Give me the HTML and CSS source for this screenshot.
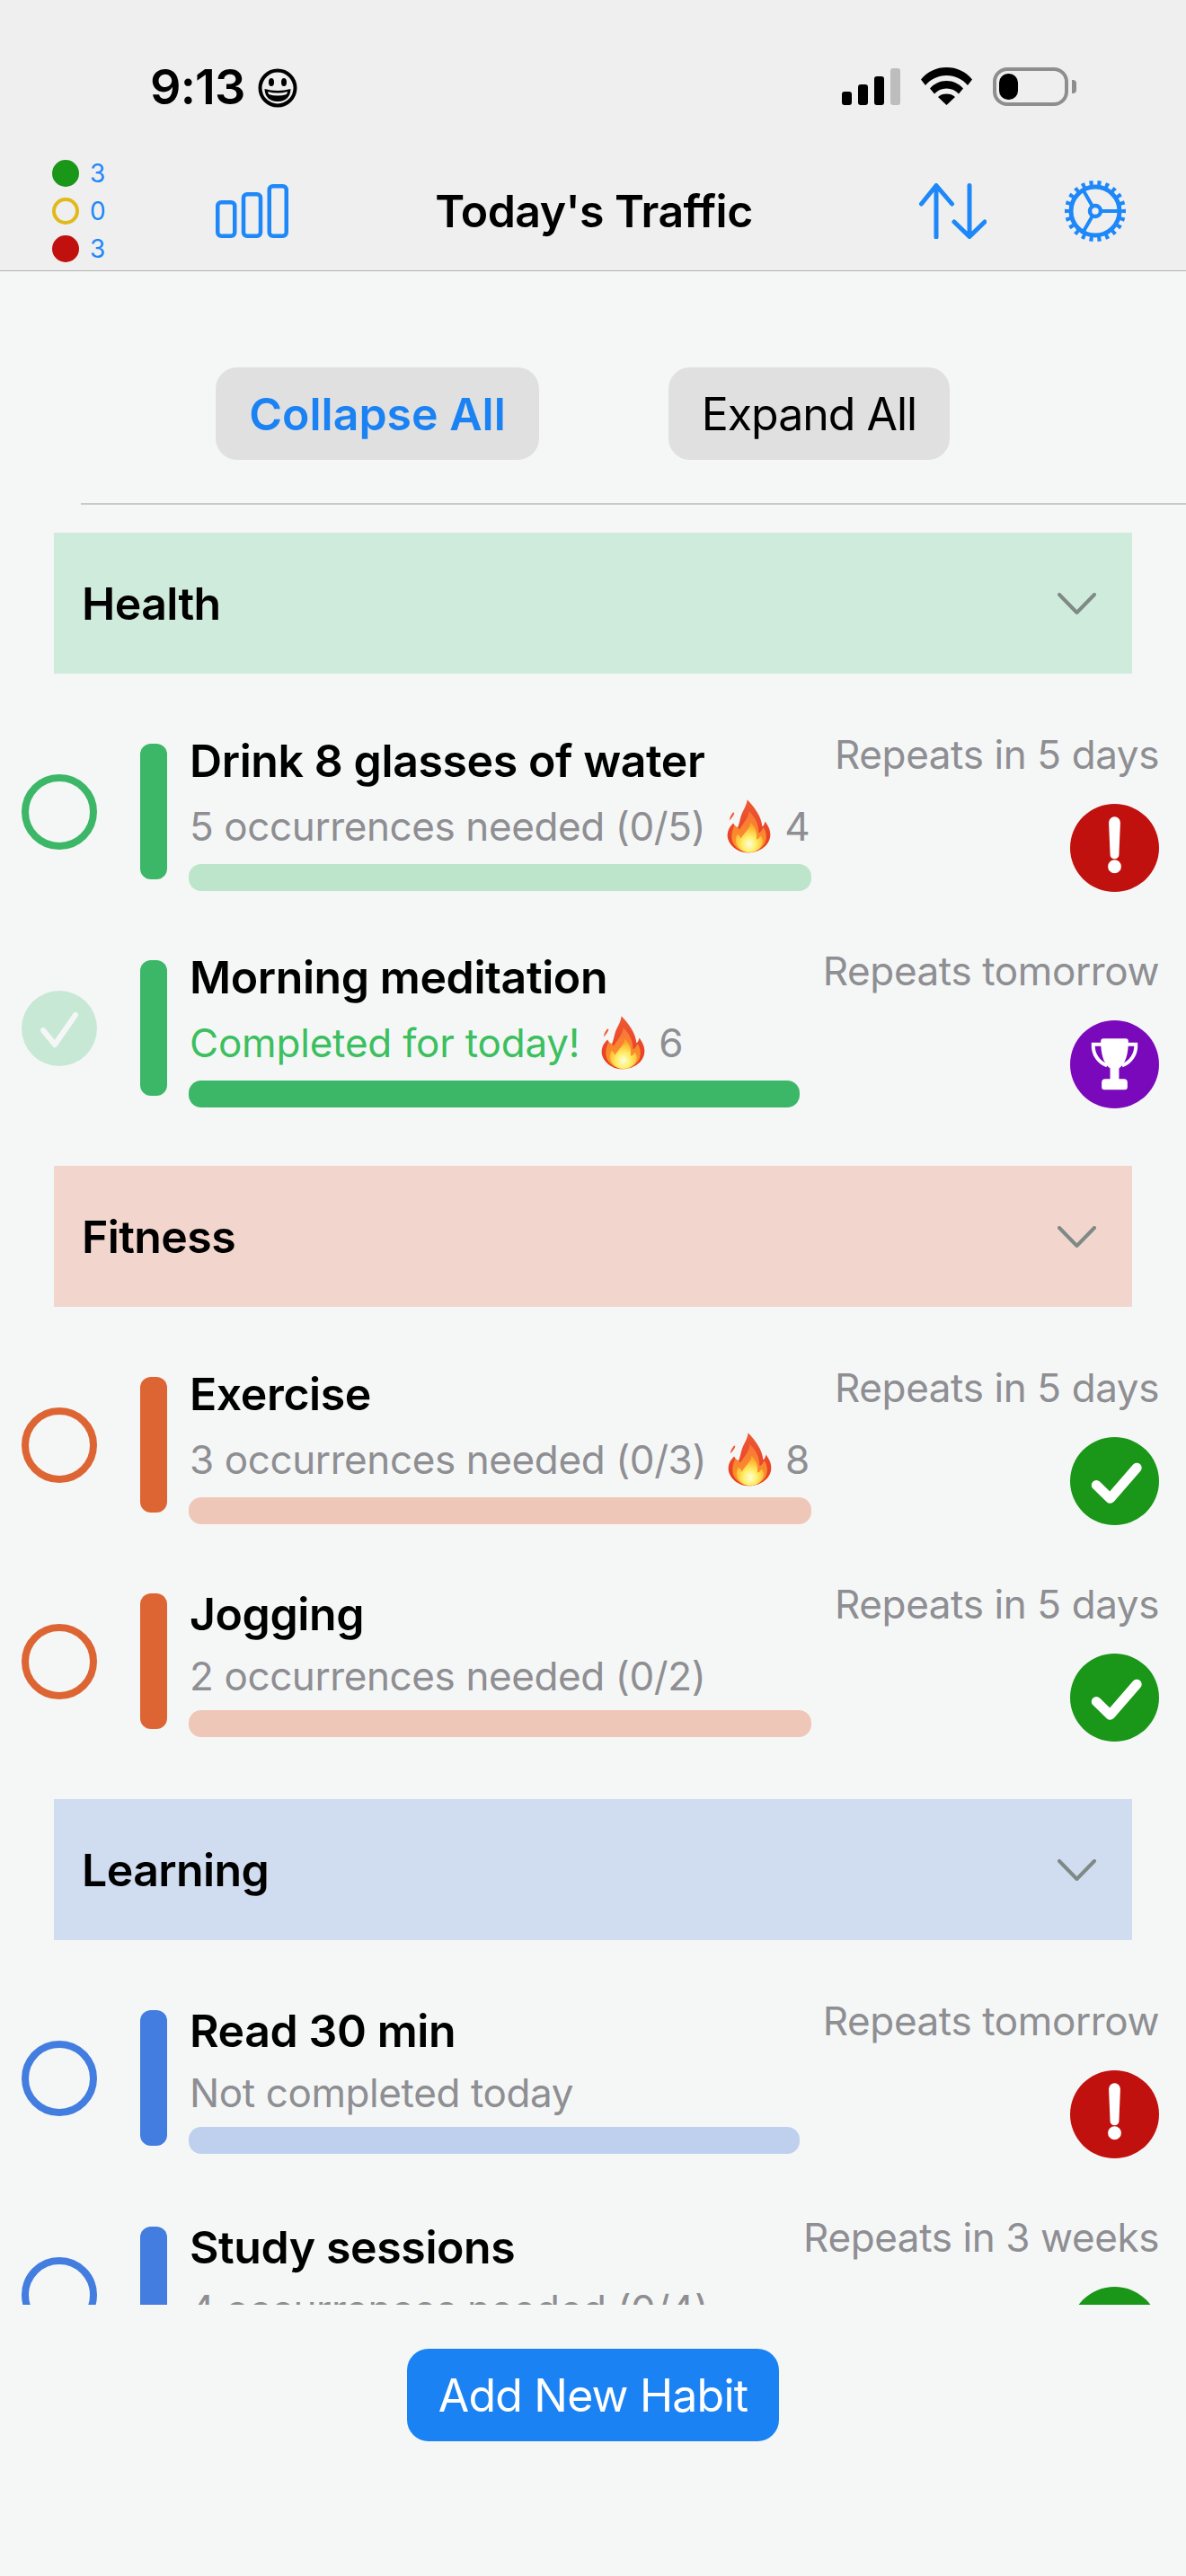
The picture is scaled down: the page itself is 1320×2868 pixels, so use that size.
FILE: index.html
```html
<!DOCTYPE html>
<html lang="en">
<head>
<meta charset="utf-8">
<title>Today's Traffic</title>
<link rel="stylesheet" href="styles.css">
</head>
<body>
<svg class="defs" aria-hidden="true">
  <defs>
    <linearGradient id="fireOuter" x1="0" y1="0" x2="0" y2="1"><stop offset="0" stop-color="#ee5a35"/><stop offset="1" stop-color="#e6391f"/></linearGradient>
    <linearGradient id="fireMid" x1="0" y1="0" x2="0" y2="1"><stop offset="0" stop-color="#f8743a"/><stop offset="1" stop-color="#fb9a22"/></linearGradient>
    <radialGradient id="fireCore" cx="0.5" cy="0.72" r="0.62"><stop offset="0" stop-color="#fffde0"/><stop offset="0.4" stop-color="#fff06a"/><stop offset="1" stop-color="#fbaa25"/></radialGradient>
    <symbol id="fire" viewBox="36 24 152 186">
      <path fill="url(#fireOuter)" d="M106 25C104 48 92 60 84 84C80 98 78 112 72 124C66 118 62 112 58 106C46 118 38 130 38 150C40 180 72 208 110 208C152 208 186 180 186 146C186 128 178 114 168 100C166 108 164 114 158 118C156 84 132 52 106 25Z"/>
      <path fill="#ef5a33" d="M58 68C52 76 46 84 45 96C50 92 58 82 62 72Z"/>
      <path fill="url(#fireMid)" d="M112 64C112 88 90 108 80 128C74 120 68 118 62 114C54 130 50 148 54 166C62 192 86 206 112 206C144 206 172 184 172 154C172 140 168 128 162 120C158 128 154 136 146 140C146 110 134 84 112 64Z"/>
      <path fill="url(#fireCore)" d="M118 104C118 124 94 140 84 160C82 152 78 148 72 144C66 156 64 168 70 180C78 198 94 207 112 207C136 207 158 192 160 168C160 160 156 152 152 150C148 156 144 162 138 162C142 140 134 120 118 104Z"/>
    </symbol>
    <symbol id="alert" viewBox="0 0 99 99">
      <path fill="#fff" d="M43 21a6.5 6.500 0 0 1 13 0l-1.500 36a5 5 0 0 1-10 0Z"/>
      <circle cx="49.500" cy="70.500" r="7.500" fill="#fff"/>
    </symbol>
    <symbol id="tick" viewBox="0 0 99 99">
      <path fill="none" stroke="#fff" stroke-width="11" stroke-linecap="round" stroke-linejoin="round" d="M29 54L44.500 69L74.500 34.500"/>
    </symbol>
    <symbol id="trophy" viewBox="0 0 99 99">
      <path fill="none" stroke="#fff" stroke-width="4" d="M36 27H25.500C25 38 31 47 41 51M63 27H73.500C74 38 68 47 58 51"/>
      <path fill="#fff" d="M37 20.500H62a3 3 0 0 1 3 3C65 38 62 49 54.500 54V66H60a4 4 0 0 1 4 4V75a3 3 0 0 1-3 3H38a3 3 0 0 1-3-3V70a4 4 0 0 1 4-4H44.500V54C37 49 34 38 34 23.500a3 3 0 0 1 3-3Z"/>
    </symbol>
    <symbol id="chevron" viewBox="0 0 43 24">
      <path fill="none" stroke="currentColor" stroke-width="4" stroke-linecap="round" stroke-linejoin="round" d="M2 2L21.500 22L41 2"/>
    </symbol>
    <symbol id="done" viewBox="0 0 84 84">
      <path fill="none" stroke="#f5f7f6" stroke-width="6" stroke-linecap="round" stroke-linejoin="round" d="M24 44L37 60L60 27"/>
    </symbol>
  </defs>
</svg>

<div class="app">
  <header class="top">
    <div class="status">
      <span class="clock">9:13</span>
      <svg class="smiley" viewBox="0 0 44 44">
        <circle cx="22" cy="22" r="19.500" fill="none" stroke="#000" stroke-width="4"/>
        <ellipse cx="15" cy="15.500" rx="3" ry="4.500"/>
        <ellipse cx="29" cy="15.500" rx="3" ry="4.500"/>
        <path d="M7.500 23Q22 27 36.500 23Q36 36.500 22 37Q8 36.500 7.500 23Z"/>
        <path fill="#efefef" d="M11 26Q22 29 33 26L32 29Q22 32 12 29Z"/>
      </svg>
      <div class="status-right">
        <svg class="signal" viewBox="0 0 65 41">
          <rect x="0" y="26" width="11" height="15" rx="3"/>
          <rect x="18" y="18" width="11" height="23" rx="3"/>
          <rect x="36" y="9" width="11" height="32" rx="3"/>
          <rect x="54" y="0" width="11" height="41" rx="3" fill="#bdbdbd"/>
        </svg>
        <svg class="wifi" viewBox="0 0 57 42">
          <path d="M28.500 0C17 0 7.500 4.500 0 13.500L5 20C11 13 19 9 28.500 9S46 13 52 20L57 13.500C49.500 4.500 40 0 28.500 0Z"/>
          <path d="M28.500 15C21 15 15 18 10 23.500L15 29.500C18.500 25.500 23 23.500 28.500 23.500S38.500 25.500 42 29.500L47 23.500C42 18 36 15 28.500 15Z"/>
          <path d="M28.500 29.500C24.500 29.500 21.500 30.500 19 33L28.500 42L38 33C35.500 30.500 32.500 29.500 28.500 29.500Z"/>
        </svg>
        <div class="battery"><span class="battery-fill"></span></div>
        <span class="battery-nub"></span>
      </div>
    </div>
    <nav class="nav">
      <div class="legend">
        <div class="legend-row"><span class="dot dot-green"></span><span class="legend-num">3</span></div>
        <div class="legend-row"><span class="dot dot-yellow"></span><span class="legend-num">0</span></div>
        <div class="legend-row"><span class="dot dot-red"></span><span class="legend-num">3</span></div>
      </div>
      <svg class="icon-chart" viewBox="0 0 81 60" fill="none" stroke="#1e88f8" stroke-width="4.500">
        <rect x="2.250" y="20.250" width="19" height="37.500" rx="4"/>
        <rect x="31" y="11.250" width="19" height="46.500" rx="4"/>
        <rect x="59.750" y="2.250" width="19" height="55.500" rx="4"/>
      </svg>
      <h1 class="title">Today's Traffic</h1>
      <svg class="icon-sort" viewBox="0 0 75 62" fill="none" stroke="#1e88f8" stroke-width="5" stroke-linecap="round" stroke-linejoin="round">
        <path d="M19 60V3M2.500 23L19 2.500L36.500 23"/>
        <path d="M56 2.500V59M39 43L56 59.500L73 43"/>
      </svg>
      <svg class="icon-gear" viewBox="0 0 70 70" fill="none" stroke="#1e88f8">
        <circle cx="35" cy="35" r="27" stroke-width="5"/>
        <circle cx="35" cy="35" r="31" stroke-width="6" pathLength="22" stroke-dasharray="0.460 0.540" stroke-dashoffset="0.230"/>
        <circle cx="35" cy="35" r="6" stroke-width="4.500"/>
        <path stroke-width="4" d="M41 35H61M32 29.800L22 12.500M32 40.200L22 57.500"/>
      </svg>
    </nav>
  </header>

  <main class="main">
    <div class="toolbar">
      <button class="pill pill-active">Collapse All</button>
      <button class="pill pill-plain">Expand All</button>
    </div>
    <div class="rule"></div>

    <section class="group green">
      <div class="group-head"><span class="group-name">Health</span><svg class="chev"><use href="#chevron"/></svg></div>
      <article class="habit">
        <div class="lead"><span class="ring"></span><span class="stripe"></span></div>
        <div class="body">
          <div class="name">Drink 8 glasses of water</div>
          <div class="sub"><span>5 occurrences needed (0/5)</span><svg class="fire"><use href="#fire"/></svg><span>4</span></div>
          <div class="track"></div>
        </div>
        <div class="side">
          <div class="repeat">Repeats in 5 days</div>
          <svg class="badge badge-red"><use href="#alert"/></svg>
        </div>
      </article>
      <article class="habit">
        <div class="lead"><svg class="ring-done"><use href="#done"/></svg><span class="stripe"></span></div>
        <div class="body">
          <div class="name">Morning meditation</div>
          <div class="sub"><span class="sub-done">Completed for today!</span><svg class="fire"><use href="#fire"/></svg><span>6</span></div>
          <div class="track track-full"></div>
        </div>
        <div class="side">
          <div class="repeat">Repeats tomorrow</div>
          <svg class="badge badge-purple"><use href="#trophy"/></svg>
        </div>
      </article>
    </section>

    <section class="group orange">
      <div class="group-head"><span class="group-name">Fitness</span><svg class="chev"><use href="#chevron"/></svg></div>
      <article class="habit">
        <div class="lead"><span class="ring"></span><span class="stripe"></span></div>
        <div class="body">
          <div class="name">Exercise</div>
          <div class="sub"><span>3 occurrences needed (0/3)</span><svg class="fire"><use href="#fire"/></svg><span>8</span></div>
          <div class="track"></div>
        </div>
        <div class="side">
          <div class="repeat">Repeats in 5 days</div>
          <svg class="badge badge-green"><use href="#tick"/></svg>
        </div>
      </article>
      <article class="habit">
        <div class="lead"><span class="ring"></span><span class="stripe"></span></div>
        <div class="body body-plain">
          <div class="name">Jogging</div>
          <div class="sub"><span>2 occurrences needed (0/2)</span></div>
          <div class="track"></div>
        </div>
        <div class="side">
          <div class="repeat">Repeats in 5 days</div>
          <svg class="badge badge-green"><use href="#tick"/></svg>
        </div>
      </article>
    </section>

    <section class="group blue">
      <div class="group-head"><span class="group-name">Learning</span><svg class="chev"><use href="#chevron"/></svg></div>
      <article class="habit">
        <div class="lead"><span class="ring"></span><span class="stripe"></span></div>
        <div class="body body-plain">
          <div class="name">Read 30 min</div>
          <div class="sub"><span>Not completed today</span></div>
          <div class="track"></div>
        </div>
        <div class="side">
          <div class="repeat">Repeats tomorrow</div>
          <svg class="badge badge-red"><use href="#alert"/></svg>
        </div>
      </article>
      <article class="habit">
        <div class="lead"><span class="ring"></span><span class="stripe"></span></div>
        <div class="body body-plain">
          <div class="name">Study sessions</div>
          <div class="sub"><span>4 occurrences needed (0/4)</span></div>
          <div class="track"></div>
        </div>
        <div class="side">
          <div class="repeat">Repeats in 3 weeks</div>
          <svg class="badge badge-green"><use href="#tick"/></svg>
        </div>
      </article>
    </section>
  </main>

  <footer class="foot">
    <button class="add">Add New Habit</button>
  </footer>
</div>
</body>
</html>
```

FILE: styles.css
```css
* { box-sizing: border-box; }
html, body { margin: 0; padding: 0; }
body { background: #f5f7f6; font-family: Inter, "Liberation Sans", sans-serif; color: #000; }
.defs { display: block; width: 0; height: 0; }
.app { display: flex; flex-direction: column; height: 2868px; overflow: hidden; }

.top { background: #efefef; border-bottom: 1px solid #b0b0b0; height: 302px; flex: none; }
.status { height: 169px; display: flex; align-items: flex-start; padding: 64px 0 0 167px; }
.clock { font-size: 54px; font-weight: 600; line-height: 66px; letter-spacing: -0.9px; }
.smiley { width: 44px; height: 44px; margin: 12px 0 0 15px; }
.status-right { display: flex; align-items: flex-start; margin-left: auto; padding-right: 122px; padding-top: 11px; }
.signal { width: 65px; height: 41px; margin-top: 1px; }
.wifi { width: 57px; height: 42px; margin-left: 23px; }
.battery { width: 84px; height: 43px; margin-left: 23px; border: 4.5px solid #8e8e8e; border-radius: 16px; padding: 3px; }
.battery-fill { display: block; width: 21px; height: 100%; background: #000; border-radius: 10px; }
.battery-nub { width: 5px; height: 15px; margin: 14px 0 0 4px; background: #8e8e8e; border-radius: 0 4px 4px 0; }

.nav { height: 132px; display: grid; grid-template-columns: 182px 81px 702px 75px 86px 70px; align-items: center; padding-left: 58px; }
.legend { display: flex; flex-direction: column; gap: 12px; }
.legend-row { display: flex; align-items: center; gap: 12px; height: 30px; }
.dot { width: 30px; height: 30px; border-radius: 50%; flex: none; }
.dot-green { background: #1a9619; }
.dot-yellow { border: 4px solid #e1b91b; }
.dot-red { background: #c1110f; }
.legend-num { font-size: 28px; line-height: 30px; color: #1e88f8; }
.icon-chart { width: 81px; height: 60px; grid-column: 2; }
.title { margin: 0 22px 0 0; font-size: 50px; font-weight: 600; line-height: 60px; text-align: center; letter-spacing: -0.55px; }
.icon-sort { width: 75px; height: 62px; grid-column: 4; }
.icon-gear { width: 70px; height: 70px; grid-column: 6; }

.main { flex: 1; overflow: hidden; }
.toolbar { display: flex; gap: 144px; padding: 107px 0 0 240px; }
.pill { height: 103px; border: 0; border-radius: 24px; background: #e0e0e0; font: 400 50px/60px Inter, "Liberation Sans", sans-serif; color: #000; padding: 0; }
.pill-active { width: 360px; color: #1b82f3; font-weight: 600; letter-spacing: 0; }
.pill-plain { width: 313px; letter-spacing: -1px; }
.rule { height: 2px; margin: 48px 0 31px 90px; background: #c9c9c9; }

.group { padding-bottom: 64px; }
.group-head { height: 157px; margin: 0 60px 78px; padding: 0 40px 0 31px; display: flex; align-items: center; justify-content: space-between; }
.group-name { font-size: 50px; font-weight: 600; letter-spacing: -0.6px; }
.chev { width: 43px; height: 24px; color: #7f8a86; }

.habit { display: flex; height: 165px; margin-bottom: 76px; padding: 0 30px 0 24px; }
.habit:last-child { margin-bottom: 0; }
.lead { display: flex; align-items: center; gap: 48px; height: 151px; flex: none; }
.ring { display: block; width: 84px; height: 84px; border-radius: 50%; border: 8px solid; }
.ring-done { display: block; width: 84px; height: 84px; border-radius: 50%; background: #c8e8d6; }
.stripe { display: block; width: 30px; height: 151px; border-radius: 12px; }
.body { flex: 1; min-width: 0; margin: -11px 26px 0 24px; }
.body-plain { margin-top: -7px; }
.name { font-size: 50px; font-weight: 600; line-height: 60px; margin-left: 1px; letter-spacing: -0.4px; white-space: nowrap; }
.sub { display: flex; align-items: center; height: 50px; margin: 18px 0 17px 1px; font-size: 44px; line-height: 50px; color: #8e8e93; letter-spacing: -0.4px; white-space: nowrap; }
.body-plain .sub { margin: 14px 0 13px 1px; }
.sub-done { color: #3cbf5f; letter-spacing: -0.2px; }
.fire { width: 49px; height: 60px; flex: none; margin: 0 15px 0 24px; }
.track { height: 30px; border-radius: 14px; }
.side { flex: none; display: flex; flex-direction: column; align-items: flex-end; margin-top: -13px; }
.repeat { font-size: 44px; line-height: 50px; color: #8e8e93; letter-spacing: -0.4px; white-space: nowrap; }
.badge { display: block; width: 99px; height: 99px; border-radius: 50%; margin-top: 30px; }
.badge-red { background: #c1110f; }
.badge-green { background: #1a9619; }
.badge-purple { background: #7a09bc; }

.green .group-head { background: #cfebdb; }
.green .ring { border-color: #3cb767; }
.green .stripe { background: #3cb767; }
.green .track { background: #bce5cb; }
.green .track.track-full { background: #3cb767; }
.orange .group-head { background: #f2d6cd; }
.orange .ring { border-color: #dd6534; }
.orange .stripe { background: #dd6534; }
.orange .track { background: #efc7b9; }
.blue .group-head { background: #d0dcf0; }
.blue .ring { border-color: #427ddf; }
.blue .stripe { background: #427ddf; }
.blue .track { background: #bfd0ee; }

.foot { height: 302px; flex: none; display: flex; justify-content: center; align-items: flex-start; padding-top: 49px; }
.add { width: 414px; height: 103px; border: 0; border-radius: 24px; background: #1b82f3; color: #fff; font: 400 50px/60px Inter, "Liberation Sans", sans-serif; letter-spacing: -0.8px; }
```
